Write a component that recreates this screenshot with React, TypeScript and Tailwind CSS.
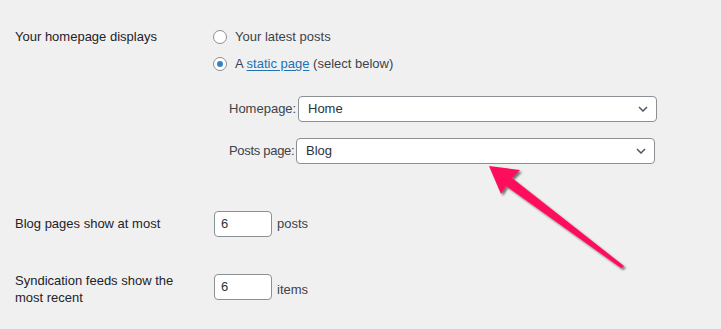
import React from "react";

const font = { fontFamily: '"Liberation Sans", Arial, sans-serif' };

function Radio({ checked }: { checked?: boolean }) {
  return (
    <span className="flex h-[14px] w-[14px] shrink-0 items-center justify-center rounded-full border border-[#8c8f94] bg-white">
      {checked && <span className="h-[6px] w-[6px] rounded-full bg-[#3582c4]" />}
    </span>
  );
}

function Chevron() {
  return (
    <svg width="10" height="6" viewBox="0 0 10 6" className="shrink-0">
      <path d="M1 1 L5 5 L9 1" fill="none" stroke="#50575e" strokeWidth="1.5" />
    </svg>
  );
}

function Select({ value }: { value: string }) {
  return (
    <div className="flex h-[26px] w-[359px] items-center justify-between rounded-[4px] border border-[#8c8f94] bg-white pl-[9px] pr-[8px] text-[13px] text-[#2c3338]">
      <span>{value}</span>
      <Chevron />
    </div>
  );
}

function NumInput({ value }: { value: string }) {
  return (
    <div className="flex h-[26px] w-[58px] items-center rounded-[4px] border border-[#8c8f94] bg-white pl-[6px] text-[13px] text-[#2c3338]">
      {value}
    </div>
  );
}

export default function App() {
  return (
    <div
      className="relative h-[329px] w-[721px] overflow-hidden bg-[#f0f0f1] pl-[15px] text-[13px] leading-[20px] text-[#1d2327]"
      style={font}
    >
      {/* Row 1 */}
      <div className="flex pt-[27px]">
        <div className="w-[198px] shrink-0">Your homepage displays</div>
        <div className="flex flex-col">
          <div className="flex items-center gap-[8px] text-[#3c434a]">
            <Radio />
            <span>Your latest posts</span>
          </div>
          <div className="mt-[7px] flex items-center gap-[8px] text-[#3c434a]">
            <Radio checked />
            <span>
              A{" "}
              <span className="text-[#2271b1] underline underline-offset-2">static page</span>{" "}
              (select below)
            </span>
          </div>
          <div className="mt-[22px] flex flex-col gap-[16px] pl-[16px]">
            <div className="flex items-center text-[#3c434a]">
              <span className="w-[69px] shrink-0 whitespace-nowrap">Homepage:</span>
              <Select value="Home" />
            </div>
            <div className="flex items-center text-[#3c434a]">
              <span className="w-[67px] shrink-0 whitespace-nowrap tracking-[-0.3px]">Posts page:</span>
              <Select value="Blog" />
            </div>
          </div>
        </div>
      </div>

      {/* Row 2 */}
      <div className="mt-[47px] flex items-center">
        <div className="w-[199px] shrink-0">Blog pages show at most</div>
        <NumInput value="6" />
        <span className="ml-[5px] text-[#3c434a]">posts</span>
      </div>

      {/* Row 3 */}
      <div className="mt-[37px] flex items-start">
        <div className="-mt-[2px] w-[199px] shrink-0 leading-[17px]">
          Syndication feeds show the
          <br />
          most recent
        </div>
        <NumInput value="6" />
        <span className="ml-[5px] self-center text-[#3c434a]">items</span>
      </div>

      {/* Arrow overlay */}
      <svg
        className="pointer-events-none absolute left-0 top-0"
        width="721"
        height="329"
        viewBox="0 0 721 329"
      >
        <defs>
          <filter id="sh" x="-20%" y="-20%" width="140%" height="140%">
            <feGaussianBlur in="SourceAlpha" stdDeviation="1.2" />
            <feOffset dx="1.5" dy="1.5" result="b" />
            <feComponentTransfer>
              <feFuncA type="linear" slope="0.55" />
            </feComponentTransfer>
            <feMerge>
              <feMergeNode />
              <feMergeNode in="SourceGraphic" />
            </feMerge>
          </filter>
        </defs>
        <polygon
          points="489,166 520,170 512,178 624,266 621,268 506,186 501,194"
          fill="#fe0d5b"
          filter="url(#sh)"
        />
      </svg>
    </div>
  );
}
